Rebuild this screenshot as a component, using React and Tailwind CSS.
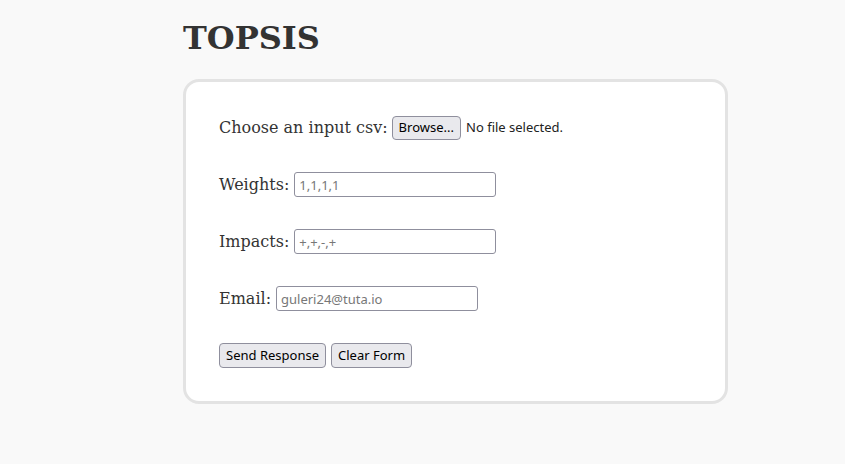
export default function App() {
  return (
    <div className="min-h-[464px] bg-[#f9f9f9] pl-[183px] pt-[18px] text-[#333]" style={{ fontFamily: '"DejaVu Serif", serif' }}>
      <h1 className="m-0 text-[32px] font-bold leading-[40px]">TOPSIS</h1>
      <div className="mt-[21px] box-border w-[545px] rounded-[16px] border-[3px] border-[#e3e3e3] bg-white px-[33px] pt-[33px] pb-[33px]">
        <form className="flex flex-col gap-[32px]" onSubmit={(e) => e.preventDefault()}>
          <div className="flex h-[25px] items-center text-[16px]">
            <span>Choose an input csv:</span>
            <button
              type="button"
              className="ml-[4px] h-[24px] rounded-[4px] border border-[#8f8f9d] bg-[#e9e9ed] px-[6px] text-[13px] text-black"
              style={{ fontFamily: '"Noto Sans", sans-serif' }}
            >
              Browse...
            </button>
            <span className="ml-[5px] text-[13px] text-[#222]" style={{ fontFamily: '"Noto Sans", sans-serif' }}>
              No file selected.
            </span>
          </div>
          <Field label="Weights:" placeholder="1,1,1,1" />
          <Field label="Impacts:" placeholder="+,+,-,+" />
          <Field label="Email:" placeholder="guleri24@tuta.io" />
          <div className="flex h-[25px] items-center gap-[5px]" style={{ fontFamily: '"Noto Sans", sans-serif' }}>
            <button type="submit" className="h-[25px] rounded-[4px] border border-[#8f8f9d] bg-[#e9e9ed] px-[6px] text-[13px] text-black">
              Send Response
            </button>
            <button type="reset" className="h-[25px] rounded-[4px] border border-[#8f8f9d] bg-[#e9e9ed] px-[6px] text-[13px] text-black">
              Clear Form
            </button>
          </div>
        </form>
      </div>
    </div>
  );
}

function Field({ label, placeholder }) {
  return (
    <div className="flex h-[25px] items-center text-[16px]">
      <span>{label}</span>
      <input
        placeholder={placeholder}
        className="ml-[5px] box-border h-[25px] w-[202px] rounded-[3px] border border-[#8f8f9d] bg-white px-[4px] text-[13px] text-black outline-none placeholder:text-[#777]"
        style={{ fontFamily: '"Noto Sans", sans-serif' }}
      />
    </div>
  );
}
